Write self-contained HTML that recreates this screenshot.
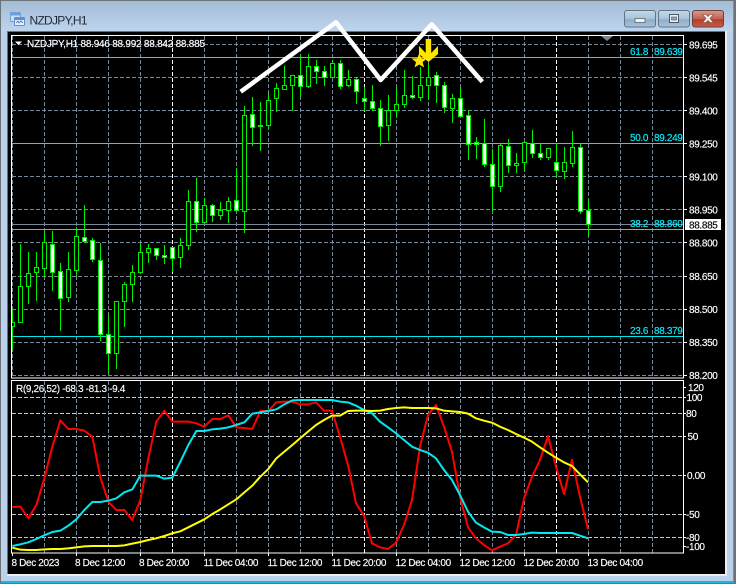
<!DOCTYPE html>
<html><head><meta charset="utf-8"><title>NZDJPY,H1</title>
<style>
html,body{margin:0;padding:0;background:#b9d1ea}
body{width:736px;height:584px;overflow:hidden;position:relative}
svg{position:absolute;left:0;top:0;display:block}
text{font-family:"Liberation Sans",sans-serif;font-size:10px;fill:#fff;letter-spacing:-.35px;stroke:#fff;stroke-width:.15px}
.c text{fill:#00f0ff;stroke:#00f0ff}
</style></head><body>
<svg width="736" height="584" viewBox="0 0 736 584" xmlns="http://www.w3.org/2000/svg">
<defs>
<linearGradient id="tb" x1="0" y1="0" x2="0" y2="1"><stop offset="0" stop-color="#a3bcd6"/><stop offset="1" stop-color="#bdd4ec"/></linearGradient>
<linearGradient id="bt" x1="0" y1="0" x2="0" y2="1"><stop offset="0" stop-color="#c6d8e8"/><stop offset=".5" stop-color="#a9c2da"/><stop offset=".55" stop-color="#8fadc9"/><stop offset="1" stop-color="#a8c2d9"/></linearGradient>
<linearGradient id="cl" x1="0" y1="0" x2="0" y2="1"><stop offset="0" stop-color="#d99a8e"/><stop offset=".5" stop-color="#c4604f"/><stop offset=".55" stop-color="#b23c2a"/><stop offset="1" stop-color="#c8604a"/></linearGradient>
<clipPath id="m"><rect x="12" y="36" width="671" height="342"/></clipPath>
<clipPath id="s"><rect x="12" y="381" width="671" height="172"/></clipPath>
</defs>
<!-- window -->
<rect x="0" y="0" width="736" height="584" fill="#6d7378"/>
<rect x="1" y="1" width="733" height="582" fill="#b9d1ea"/>
<rect x="1" y="1" width="733" height="30" fill="url(#tb)"/>
<rect x="1" y="581" width="733" height="2" fill="#1fb4d6"/>
<rect x="733" y="1" width="1" height="582" fill="#1fb4d6"/>
<rect x="7" y="31" width="720" height="545" fill="#e8eef4"/>
<rect x="7" y="31" width="718" height="543" fill="#6b7076"/>
<rect x="8" y="32" width="717" height="542" fill="#000"/>
<!-- icon -->
<rect x="10.5" y="12.5" width="10" height="9" rx="1" fill="#cfe0f4" stroke="#6f9fd8"/>
<rect x="10.5" y="12.5" width="10" height="3" fill="#6f9fd8"/>
<rect x="14.5" y="17.5" width="10" height="8" rx="1" fill="#e8f1fb" stroke="#5d90cf"/>
<rect x="14.5" y="17.5" width="10" height="2.5" fill="#5d90cf"/>
<path d="M16 23l2-2 1 2 2-2 2 2" fill="none" stroke="#3d6fb0" stroke-width=".8"/>
<text x="29.5" y="24.500" style="font-size:12px;letter-spacing:-.72px;fill:#1f2a38;stroke:none">NZDJPY,H1</text>
<!-- buttons -->
<rect x="624.5" y="10.5" width="31" height="16.5" rx="2.5" fill="url(#bt)" stroke="#5f7488"/>
<rect x="635" y="18.5" width="10" height="4" fill="#f0f4f8" stroke="#56646f" stroke-width=".8"/>
<rect x="658.5" y="10.5" width="31" height="16.5" rx="2.5" fill="url(#bt)" stroke="#5f7488"/>
<rect x="669.5" y="14.5" width="9" height="8" fill="#e9eff5" stroke="#4a5864"/>
<rect x="671.5" y="17" width="5" height="3" fill="#8ba6bf" stroke="#4a5864" stroke-width=".6"/>
<rect x="692.5" y="10.5" width="31" height="16.5" rx="2.5" fill="url(#cl)" stroke="#6e4038"/>
<path d="M702.5 14.5l3.500 0 2 2 2-2 3.500 0-3.500 4 3.500 4-3.500 0-2-2-2 2-3.500 0 3.500-4z" fill="#f4f0ee" stroke="#7d4a40" stroke-width=".6"/>

<!-- grid main -->
<g clip-path="url(#m)" fill="none" stroke="#778899" stroke-dasharray="4 2">
<path d="M12 44.5H683M12 77.5H683M12 110.5H683M12 143.5H683M12 176.5H683M12 209.5H683M12 242.5H683M12 276.5H683M12 309.5H683M12 342.5H683M12 375.5H683"/>
<path d="M12.5 36V378M44.5 36V378M76.5 36V378M108.5 36V378M140.5 36V378M204.5 36V378M236.5 36V378M268.5 36V378M300.5 36V378M332.5 36V378M396.5 36V378M428.5 36V378M460.5 36V378M492.5 36V378M524.5 36V378M588.5 36V378M620.5 36V378M652.5 36V378"/>
<path stroke="#fff" d="M172.5 36V378M364.5 36V378M556.5 36V378"/>
</g>
<!-- lines -->
<path d="M12 224.5H683" stroke="#778899" fill="none"/>
<path d="M12 57.5H683M12 143.5H683M12 229.5H683M12 336.5H683" stroke="#00e6e6" fill="none"/>
<!-- candles -->
<g clip-path="url(#m)">
<path fill="none" stroke="#00ee00" d="M12.5 309V350M20.5 244V323M28.5 252V304M36.5 252V301M44.5 231V277M52.5 231V291M60.5 263V331M68.5 252V302M76.5 227V276M84.5 205V243M92.5 238V262M100.5 243V341M108.5 315V373M116.5 301V369M124.5 282V327M132.5 265V302M140.5 243V273M148.5 244V263M156.5 248V260M164.5 245V264M172.5 247V272M180.5 238V268M188.5 190V250M196.5 178V232M204.5 198V224M212.5 204V222M220.5 202V220M228.5 197V223M236.5 168V212M244.5 106V233M252.5 97V146M260.5 102V151M268.5 93V129M276.5 83V112M284.5 66V88M292.5 76V111M300.5 55V97M308.5 54V88M316.5 60V84M324.5 66V86M332.5 60V77M340.5 60V89M348.5 70V87M356.5 77V104M364.5 87V111M372.5 85V111M380.5 100V146M388.5 95V141M396.5 88V117M404.5 70V108M412.5 76V99M420.5 67V101M428.5 63V99M436.5 72V103M444.5 82V113M452.5 94V123M460.5 87V117M468.5 110V160M476.5 137V159M484.5 119V167M492.5 149V211M500.5 143V192M508.5 139V173M516.5 153V173M524.5 142V171M532.5 130V158M540.5 143V160M548.5 148V160M556.5 143V178M564.5 147V179M572.5 131V167M580.5 143V214M588.5 199V235"/>
<path fill="#000" stroke="#00ee00" d="M10.5 322.5h4v4h-4zM18.5 286.5h4v36h-4zM26.5 273.5h4v13h-4zM34.5 267.5h4v5h-4zM42.5 242.5h4v26h-4zM66.5 269.5h4v28h-4zM74.5 236.5h4v34h-4zM114.5 301.5h4v52h-4zM122.5 284.5h4v17h-4zM130.5 272.5h4v12h-4zM138.5 252.5h4v20h-4zM146.5 248.5h4v4h-4zM178.5 245.5h4v12h-4zM186.5 201.5h4v44h-4zM202.5 205.5h4v17h-4zM218.5 210.5h4v5h-4zM226.5 201.5h4v9h-4zM242.5 115.5h4v96h-4zM266.5 100.5h4v25h-4zM274.5 88.5h4v10h-4zM282.5 85.5h4v4h-4zM290.5 75.5h4v10h-4zM306.5 66.5h4v20h-4zM330.5 63.5h4v14h-4zM346.5 79.5h4v6h-4zM386.5 110.5h4v15h-4zM394.5 104.5h4v6h-4zM402.5 95.5h4v9h-4zM418.5 85.5h4v12h-4zM426.5 77.5h4v8h-4zM450.5 98.5h4v10h-4zM498.5 145.5h4v41h-4zM514.5 163.5h4v2h-4zM522.5 142.5h4v20h-4zM546.5 148.5h4v9h-4zM562.5 162.5h4v9h-4zM570.5 147.5h4v16h-4z"/>
<path fill="#fff" stroke="#00ee00" d="M50.5 244.5h4v28h-4zM58.5 271.5h4v27h-4zM82.5 237.5h4v4h-4zM90.5 240.5h4v19h-4zM98.5 260.5h4v74h-4zM106.5 334.5h4v19h-4zM154.5 248.5h4v7h-4zM162.5 255.5h4v2h-4zM170.5 247.5h4v11h-4zM194.5 201.5h4v21h-4zM210.5 205.5h4v10h-4zM234.5 200.5h4v10h-4zM250.5 114.5h4v13h-4zM258.5 125.5h4v1h-4zM298.5 75.5h4v11h-4zM314.5 66.5h4v5h-4zM322.5 71.5h4v6h-4zM338.5 63.5h4v23h-4zM354.5 79.5h4v12h-4zM362.5 98.5h4v3h-4zM370.5 101.5h4v7h-4zM378.5 108.5h4v18h-4zM410.5 95.5h4v2h-4zM434.5 75.5h4v10h-4zM442.5 85.5h4v22h-4zM458.5 98.5h4v18h-4zM466.5 115.5h4v29h-4zM474.5 142.5h4v2h-4zM482.5 143.5h4v21h-4zM490.5 164.5h4v22h-4zM506.5 146.5h4v19h-4zM530.5 143.5h4v10h-4zM538.5 153.5h4v4h-4zM554.5 162.5h4v8h-4zM578.5 147.5h4v64h-4zM586.5 210.5h4v14h-4z"/>
</g>
<!-- frames -->
<rect x="11.5" y="35.5" width="672" height="342.5" fill="none" stroke="#fff"/>
<path d="M601 36h12l-6 5z" fill="#778899"/>
<path d="M15 41.5h7l-3.5 3.5z" fill="#fff"/>
<text x="27" y="47" style="letter-spacing:-.24px">NZDJPY,H1  88.946 88.992 88.842 88.885</text>
<!-- fib labels -->
<g class="c">
<text x="630" y="55">61.8</text><text x="654" y="55">89.639</text>
<text x="630" y="141">50.0</text><text x="654" y="141">89.249</text>
<text x="630" y="227">38.2</text><text x="654" y="227">88.860</text>
<text x="630" y="334">23.6</text><text x="654" y="334">88.379</text>
</g>
<!-- zigzag -->
<polyline points="240.7,91.7 336,22.3 380.7,80 431.7,24.3 482.3,81.7" fill="none" stroke="#fff" stroke-width="4.5" stroke-linejoin="round"/>
<!-- arrow + star -->
<path d="M425.7 39h5.500v14l6.800-7v8l-9.500 8-9.500-8v-8l6.700 7z" fill="#ffe600"/>
<path d="M419.3 53l2 5.200 5.700.3-4.400 3.600 1.500 5.400-4.800-3-4.800 3 1.500-5.400-4.400-3.600 5.700-.3z" fill="#ffe600"/>
<!-- price axis -->
<path d="M684 44.500h3M684 77.500h3M684 110.500h3M684 143.500h3M684 176.500h3M684 209.500h3M684 242.500h3M684 276.500h3M684 309.500h3M684 342.500h3M684 375.500h3" stroke="#fff" fill="none"/>
<g>
<text x="689" y="48.500">89.695</text>
<text x="689" y="81.500">89.545</text>
<text x="689" y="114.500">89.400</text>
<text x="689" y="147.500">89.250</text>
<text x="689" y="180.500">89.100</text>
<text x="689" y="213.500">88.950</text>
<text x="689" y="246.500">88.800</text>
<text x="689" y="280">88.650</text>
<text x="689" y="313">88.500</text>
<text x="689" y="346">88.350</text>
<text x="689" y="379">88.200</text>
</g>
<rect x="685" y="219" width="36" height="11" fill="#fff"/>
<text x="689" y="228.500" style="fill:#000;stroke:#000">88.885</text>

<!-- sub window -->
<g clip-path="url(#s)" fill="none" stroke-dasharray="4 2">
<path stroke="#c4c9d0" d="M12 397.500H683M12 413.500H683M12 436.500H683M12 475.500H683M12 514.500H683M12 537.500H683"/>
<path stroke="#778899" d="M44.500 381V553M76.500 381V553M108.500 381V553M140.500 381V553M204.500 381V553M236.500 381V553M268.500 381V553M300.500 381V553M332.500 381V553M396.500 381V553M428.500 381V553M460.500 381V553M492.500 381V553M524.500 381V553M588.500 381V553M620.500 381V553M652.500 381V553"/>
<path stroke="#fff" d="M172.500 381V553M364.500 381V553M556.500 381V553"/>
</g>
<g clip-path="url(#s)" fill="none" stroke-width="6" stroke-linejoin="round">
<g transform="translate(0,370) scale(.33333)">
<polyline stroke="#f00" points="37,411 61,410 85,445 109,405 133,325 157,230 181,151 205,177 229,177 253,182 277,200 301,322 325,395 349,420 373,420 397,450 421,390 445,265 469,155 493,122 517,155 541,155 565,155 589,160 613,170 637,147 661,147 685,136 709,172 733,174 757,177 781,123 805,123 829,97 853,95 877,95 900,103"/>
<polyline stroke="#00e8f0" points="37,528 61,523 85,517 109,507 133,496 157,486 181,482 205,467 229,448 253,420 277,396 301,396 325,392 349,385 373,367 397,358 421,317 445,317 469,317 493,326 517,323 541,275 565,225 589,183 613,183 637,178 661,176 685,172 709,165 733,157 757,131 781,127 805,123 829,118 853,103 877,91 900,90"/>
<polyline stroke="#ff0" points="37,533 61,539 85,540 109,540 133,538 157,537 181,537 205,535 229,532 253,529 277,528 301,528 325,528 349,528 373,526 397,521 421,516 445,510 469,505 493,498 517,490 541,484 565,472 589,460 613,448 637,432 661,418 685,403 709,388 733,367 757,347 781,320 805,297 829,265 853,245 877,225 900,205"/>
</g>
<g transform="translate(300,370) scale(.33333)">
<polyline stroke="#f00" points="0,103 24,103 48,97 72,122 96,122 120,200 144,285 168,400 192,437 216,520 240,532 264,537 288,518 312,465 336,390 360,230 384,135 408,105 432,170 456,245 480,380 504,472 528,505 552,525 576,541 600,530 624,520 648,495 672,385 696,320 720,270 744,198 768,290 792,372 816,270 840,380 864,478"/>
<polyline stroke="#00e8f0" points="0,90 96,90 120,95 144,97 168,107 192,120 216,130 240,155 264,172 288,190 312,210 336,230 360,240 384,248 408,265 432,300 456,330 480,375 504,425 528,458 552,472 576,485 600,486 624,495 648,495 672,492 696,488 720,489 744,489 768,489 792,489 816,489 840,497 864,505"/>
<polyline stroke="#ff0" points="0,205 24,185 48,165 72,150 96,137 120,137 144,123 168,122 192,122 216,123 240,122 264,117 288,114 312,112 336,114 360,114 384,114 408,115 432,122 456,124 480,126 504,131 528,145 552,152 576,158 600,170 624,180 648,192 672,203 696,215 720,232 744,248 768,263 792,277 816,288 840,313 864,337"/>
</g>
</g>
<rect x="11.500" y="380.500" width="672" height="172.500" fill="none" stroke="#fff"/>
<text x="16" y="392">R(9,26,52) -68.3 -81.3 -9.4</text>
<path d="M684 387.500h2M684 397.500h2M684 413.500h2M684 436.500h2M684 475.500h2M684 514.500h2M684 537.500h2M684 546.500h2" stroke="#fff" fill="none"/>
<text x="688" y="391">120</text>
<text x="686.500" y="401">100</text>
<text x="686" y="417">80</text>
<text x="687.500" y="440">50</text>
<text x="687" y="479">0.00</text>
<text x="686" y="518">-50</text>
<text x="686" y="541">-80</text>
<text x="686" y="550">-100</text>
<!-- time axis -->
<path d="M12.500 553v3M76.500 553v3M140.500 553v3M204.500 553v3M268.500 553v3M332.500 553v3M396.500 553v3M460.500 553v3M524.500 553v3M588.500 553v3" stroke="#fff" fill="none"/>
<text x="11.500" y="566">8 Dec 2023</text>
<text x="75" y="566">8 Dec 12:00</text>
<text x="139" y="566">8 Dec 20:00</text>
<text x="203.500" y="566">11 Dec 04:00</text>
<text x="267.500" y="566">11 Dec 12:00</text>
<text x="331.500" y="566">11 Dec 20:00</text>
<text x="395.500" y="566">12 Dec 04:00</text>
<text x="459.500" y="566">12 Dec 12:00</text>
<text x="523.500" y="566">12 Dec 20:00</text>
<text x="587.500" y="566">13 Dec 04:00</text>
</svg>
</body></html>
